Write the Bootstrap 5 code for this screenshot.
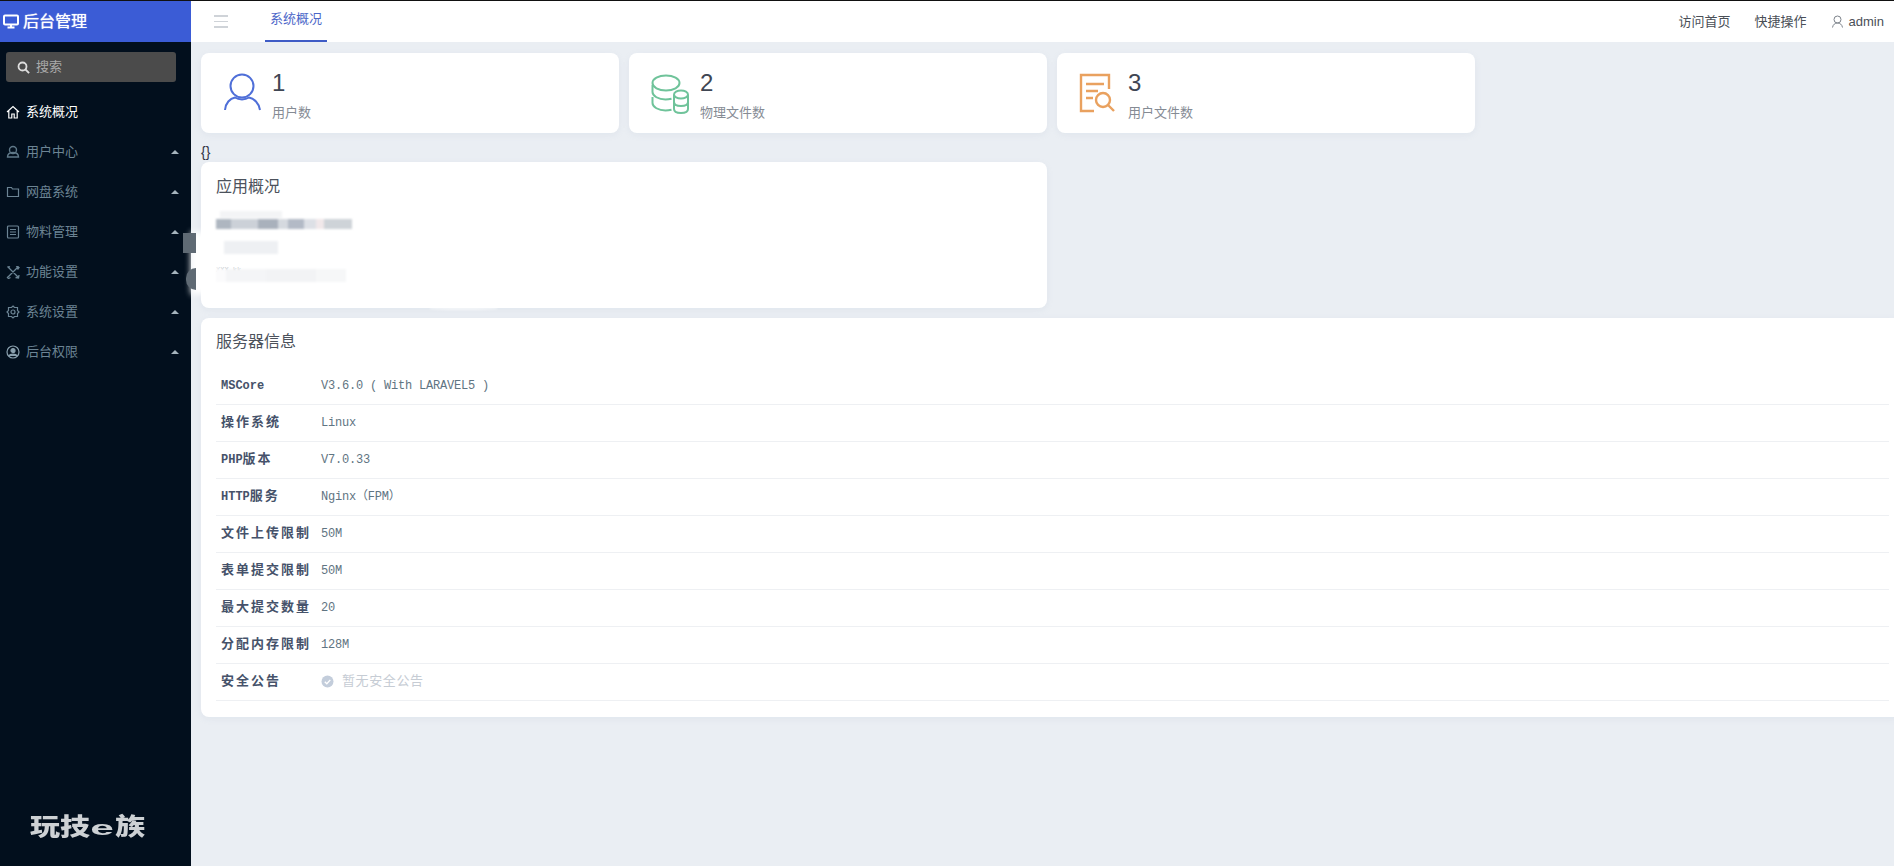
<!DOCTYPE html>
<html lang="zh-CN">
<head>
<meta charset="utf-8">
<title>后台管理</title>
<link rel="stylesheet" href="https://cdn.jsdelivr.net/npm/bootstrap@5.3.0/dist/css/bootstrap.min.css">
<style>
html,body{height:100%;overflow:hidden}
body{background:#eaeef3;border-top:1px solid #111;font-family:"Liberation Sans","Noto Sans CJK SC",sans-serif;font-size:13px;color:#5c6470}
.shell{height:865px}
.sidebar{width:191px;flex:none;background:#020f1d;color:#71899a}
.brand{height:41px;background:#3b5cd6;color:#fff;font-size:16px;padding-left:2px;gap:3px;text-shadow:0 0 1px #fff}
.searchbox{height:30px;margin:10px 15px 0 6px;background:#4b4b4b;border-radius:3px;color:#a9a9a9;padding-left:11px;gap:6px}
.menu{margin-top:10px}
.menu-item{height:40px;padding:0 12px 0 6px;gap:6px;color:#6c8494;font-size:13px}
.menu-item.active-item{color:#fff}
.menu-item svg{flex:none}
.caret-up{width:0;height:0;border-left:4px solid transparent;border-right:4px solid transparent;border-bottom:4px solid #a6b4bd}
.logo-text{color:#cdd1d4;font-size:24px;font-weight:900;line-height:28px;margin:0 0 24px 30px;transform:scaleX(1.25);transform-origin:left center;white-space:nowrap}
.logo-e{font-size:20px;font-weight:700;display:inline-block;margin:0 5px 0 4px;transform:scaleX(1.7)}
.main-area{min-width:0}
.topbar{height:41px;background:#fff;flex:none}
.burger{width:14px;margin-left:23px;gap:4px}
.burger span{height:1.5px;background:#cfd3d8}
.tab-link{margin-left:37px;width:62px;height:41px;color:#4b66c8;border-bottom:2px solid #3f5cc6;text-align:center;line-height:36px}
.top-links{gap:24px;padding-right:10px;color:#4a4f57}
.user-link{gap:5px}
.work{padding:11px 0 0 10px}
.grow-row{--bs-gutter-x:10px;margin-right:-14px}
.panel{background:#fff;border-radius:8px;box-shadow:0 2px 6px rgba(160,175,200,.12)}
.stat{height:80px;padding:0 0 0 22px;gap:10px}
.stat-num{font-size:24px;line-height:28px;color:#3f4653;padding-top:4px}
.stat-label{font-size:13px;line-height:18px;color:#858b94;margin-top:7px}
.braces{height:29px;line-height:18px;font-size:14px;font-family:"Liberation Sans",sans-serif;color:#334;padding-top:10px}
.app-panel{height:146px;padding:15px 15px 0;position:relative}
.panel-title{font-size:16px;line-height:20px;color:#4c525c}
.blur-a{position:relative;width:136px;height:10px;margin-top:22px;background:linear-gradient(90deg,#aeb6c0 0 15px,#ccd1d8 15px 42px,#a9b1bc 42px 62px,#d5d9df 62px 72px,#b3bac6 72px 88px,#dde0e6 88px 100px,#f1e8ea 100px 108px,#ced3d8 108px 136px);filter:blur(1px)}
.blur-a::before{content:"";position:absolute;left:4px;top:-8px;width:62px;height:7px;background:#f3f4f6}
.blur-b{width:54px;height:13px;margin:12px 0 0 8px;background:#eef0f3;filter:blur(.8px)}
.blur-c{font-size:7px;line-height:8px;color:#c4c8cc;margin-top:12px;font-family:"Liberation Mono",monospace}
.blur-d{width:130px;height:13px;margin-top:-5px;background:linear-gradient(90deg,#fbfbfc 0 10px,#f4f5f7 10px 50px,#f2f3f5 50px 100px,#f6f7f8 100px 130px);filter:blur(.8px)}
.smear{position:absolute;left:-10px;top:70px;width:26px;height:62px;background:#fff;filter:blur(3px)}
.smear-low{position:absolute;left:229px;top:145px;width:67px;height:3px;background:#fff;border-radius:0 0 50% 50%;filter:blur(1px);opacity:.6}
.blob-square{position:absolute;left:-18px;top:71px;width:13px;height:20px;background:#5f6a74}
.blob-round{position:absolute;left:-15px;top:106px;width:10px;height:22px;background:#5f6a74;border-radius:11px 0 0 11px}
.server-panel{margin-top:10px;height:399px;padding:15px 15px 0}
.server-panel .panel-title{line-height:18px;margin-bottom:16px}
.info-table{margin:0;--bs-table-bg:transparent;--bs-table-border-color:#eef0f3;font-family:"Liberation Mono","Noto Sans CJK SC",monospace;font-size:12px;width:1673px}
.info-table th,.info-table td{height:37px;padding:0 5px;vertical-align:middle;line-height:16px}
.info-table tr:first-child th,.info-table tr:first-child td{padding-top:2px}
.info-table th{width:100px;color:#46526a;font-weight:700;white-space:nowrap}
.info-table td{color:#5f7482;letter-spacing:-.2px}
.wide-han{font-size:13px;letter-spacing:2px}
.notice{color:#c6ccd4;font-size:13px;gap:8px;letter-spacing:.6px}
</style>
</head>
<body>
<div class="shell d-flex">
  <aside class="sidebar d-flex flex-column">
    <div class="brand d-flex align-items-center">
      <svg width="18" height="15" viewBox="0 0 17 15" fill="none" stroke="#fff" stroke-width="2"><rect x="1.5" y="1.5" width="14" height="9" rx="1"/><path d="M5 13.5h7M8.5 11v2"/></svg>
      <span>后台管理</span>
    </div>
    <div class="searchbox d-flex align-items-center">
      <svg width="13" height="13" viewBox="0 0 13 13" fill="none" stroke="#ddd" stroke-width="1.8"><circle cx="5.5" cy="5.5" r="4"/><path d="M8.5 8.5l3.6 3.6"/></svg>
      <span>搜索</span>
    </div>
    <nav class="menu">
      <div class="menu-item active-item d-flex align-items-center">
        <svg width="14" height="14" viewBox="0 0 14 14" fill="none" stroke="#fff" stroke-width="1.2"><path d="M1 7l6-5.5L13 7M2.8 5.8V13h3V9h2.4v4h3V5.8"/></svg>
        <span>系统概况</span>
      </div>
      <div class="menu-item d-flex align-items-center">
        <svg width="14" height="14" viewBox="0 0 14 14" fill="none" stroke="#5f7888" stroke-width="1.4"><circle cx="7" cy="5" r="3.5"/><path d="M1.5 12c0-3 2-4.5 5.5-4.5s5.500 1.500 5.500 4.500z"/></svg>
        <span class="flex-grow-1">用户中心</span><i class="caret-up"></i>
      </div>
      <div class="menu-item d-flex align-items-center">
        <svg width="14" height="14" viewBox="0 0 14 14" fill="none" stroke="#6c8494" stroke-width="1.2"><path d="M1.500 2.500h4l1 1.500h6v7.500h-11z"/></svg>
        <span class="flex-grow-1">网盘系统</span><i class="caret-up"></i>
      </div>
      <div class="menu-item d-flex align-items-center">
        <svg width="14" height="14" viewBox="0 0 14 14" fill="none" stroke="#6c8494" stroke-width="1.2"><rect x="1.500" y="1" width="11" height="12" rx="1"/><path d="M4 4.500h6M4 7h6M4 9.500h6"/></svg>
        <span class="flex-grow-1">物料管理</span><i class="caret-up"></i>
      </div>
      <div class="menu-item d-flex align-items-center">
        <svg width="14" height="14" viewBox="0 0 14 14" fill="none" stroke="#6c8494" stroke-width="1.300"><path d="M1.500 1.500l11 11M12.500 1.500l-11 11M2 2.500l2-1M10 1.500l3 1-1.500 2M1 12l1.500 1.500 2-1M9.500 12.500l3 .5.500-3"/></svg>
        <span class="flex-grow-1">功能设置</span><i class="caret-up"></i>
      </div>
      <div class="menu-item d-flex align-items-center">
        <svg width="14" height="14" viewBox="0 0 14 14" fill="none" stroke="#6c8494" stroke-width="1.200"><path d="M7 1l1.500 1.500h3v3L13 7l-1.500 1.500v3h-3L7 13l-1.500-1.500h-3v-3L1 7l1.500-1.500v-3h3z"/><circle cx="7" cy="7" r="2"/></svg>
        <span class="flex-grow-1">系统设置</span><i class="caret-up"></i>
      </div>
      <div class="menu-item d-flex align-items-center">
        <svg width="14" height="14" viewBox="0 0 14 14" fill="none" stroke="#8aa0ae" stroke-width="1.200"><circle cx="7" cy="7" r="6"/><circle cx="7" cy="5.500" r="2" fill="#8aa0ae"/><path d="M3 11c1-2.500 7-2.500 8 0" fill="#8aa0ae"/></svg>
        <span class="flex-grow-1">后台权限</span><i class="caret-up"></i>
      </div>
    </nav>
    <div class="logo-text mt-auto">玩技<span class="logo-e">e</span>族</div>
  </aside>

  <div class="main-area flex-grow-1 d-flex flex-column">
    <header class="topbar d-flex align-items-center">
      <div class="burger d-flex flex-column"><span></span><span></span><span></span></div>
      <div class="tab-link">系统概况</div>
      <div class="top-links d-flex align-items-center ms-auto">
        <span>访问首页</span>
        <span>快捷操作</span>
        <span class="user-link d-flex align-items-center">
          <svg width="13" height="13" viewBox="0 0 13 13" fill="none" stroke="#7d838b" stroke-width="1"><circle cx="6.500" cy="4.500" r="3.500"/><path d="M1.500 12.500c.5-3 2.500-4.500 5-4.500s4.500 1.500 5 4.500"/></svg>
          <span>admin</span>
        </span>
      </div>
    </header>

    <main class="work">
      <div class="row grow-row">
        <div class="col-3">
          <div class="panel stat d-flex align-items-center">
            <svg width="39" height="44" viewBox="0 0 39 44" fill="none" stroke="#4f6fd8" stroke-width="2"><circle cx="19" cy="15" r="11.500"/><path d="M2 39c.5-7 5-11.500 10-12.500 4 2.500 10 2.500 14 0 5 1 10 5.500 11 12.500"/></svg>
            <div><div class="stat-num">1</div><div class="stat-label">用户数</div></div>
          </div>
        </div>
        <div class="col-3">
          <div class="panel stat d-flex align-items-center">
            <svg width="39" height="44" viewBox="0 0 39 44" fill="none" stroke="#6fc39a" stroke-width="2"><ellipse cx="15" cy="12" rx="13.500" ry="7.500"/><path d="M1.500 14v7c0 4 6 7.500 13 7.500 2 0 4-.3 6-.8M1.500 26v6c0 4 6 7.500 13 7.500 2 0 4-.3 6-.8"/><ellipse cx="30" cy="23.500" rx="7" ry="4"/><path d="M23 24v14c0 2.500 3 4 7 4s7-1.500 7-4V24M23 31c0 2.500 3 4 7 4s7-1.500 7-4"/></svg>
            <div><div class="stat-num">2</div><div class="stat-label">物理文件数</div></div>
          </div>
        </div>
        <div class="col-3">
          <div class="panel stat d-flex align-items-center">
            <svg width="39" height="44" viewBox="0 0 39 44" fill="none" stroke="#e9a15f" stroke-width="2.400"><path d="M30 18V4H2v36h13"/><path d="M7 13h18M7 20h12M7 27h7"/><circle cx="24" cy="29" r="7"/><path d="M29 34l6 6"/></svg>
            <div><div class="stat-num">3</div><div class="stat-label">用户文件数</div></div>
          </div>
        </div>
      </div>
      <div class="braces">{}</div>
      <div class="row grow-row">
        <div class="col-6">
          <div class="panel app-panel">
            <div class="smear"></div>
            <div class="blob-square"></div>
            <div class="blob-round"></div>
            <div class="panel-title">应用概况</div>
            <div class="blur-a"></div>
            <div class="blur-b"></div>
            <div class="blur-c">XXX.kk</div>
            <div class="blur-d"></div>
            <div class="smear-low"></div>
          </div>
        </div>
      </div>
      <div class="row grow-row">
        <div class="col-12">
          <div class="panel server-panel">
            <div class="panel-title">服务器信息</div>
            <table class="table info-table">
              <tbody>
                <tr><th>MSCore</th><td>V3.6.0 ( With LARAVEL5 )</td></tr>
                <tr><th><span class="wide-han">操作系统</span></th><td>Linux</td></tr>
                <tr><th>PHP<span class="wide-han">版本</span></th><td>V7.0.33</td></tr>
                <tr><th>HTTP<span class="wide-han">服务</span></th><td>Nginx（FPM）</td></tr>
                <tr><th><span class="wide-han">文件上传限制</span></th><td>50M</td></tr>
                <tr><th><span class="wide-han">表单提交限制</span></th><td>50M</td></tr>
                <tr><th><span class="wide-han">最大提交数量</span></th><td>20</td></tr>
                <tr><th><span class="wide-han">分配内存限制</span></th><td>128M</td></tr>
                <tr><th><span class="wide-han">安全公告</span></th><td><span class="notice d-flex align-items-center">
                  <svg width="13" height="13" viewBox="0 0 13 13"><circle cx="6.500" cy="6.500" r="6" fill="#c3cddb"/><path d="M3.800 6.700l2 2 3.500-3.800" fill="none" stroke="#fff" stroke-width="1.400"/></svg>
                  <span>暂无安全公告</span></span></td></tr>
              </tbody>
            </table>
          </div>
        </div>
      </div>
    </main>
  </div>
</div>
<script src="https://cdn.jsdelivr.net/npm/bootstrap@5.3.0/dist/js/bootstrap.bundle.min.js"></script>
</body>
</html>
